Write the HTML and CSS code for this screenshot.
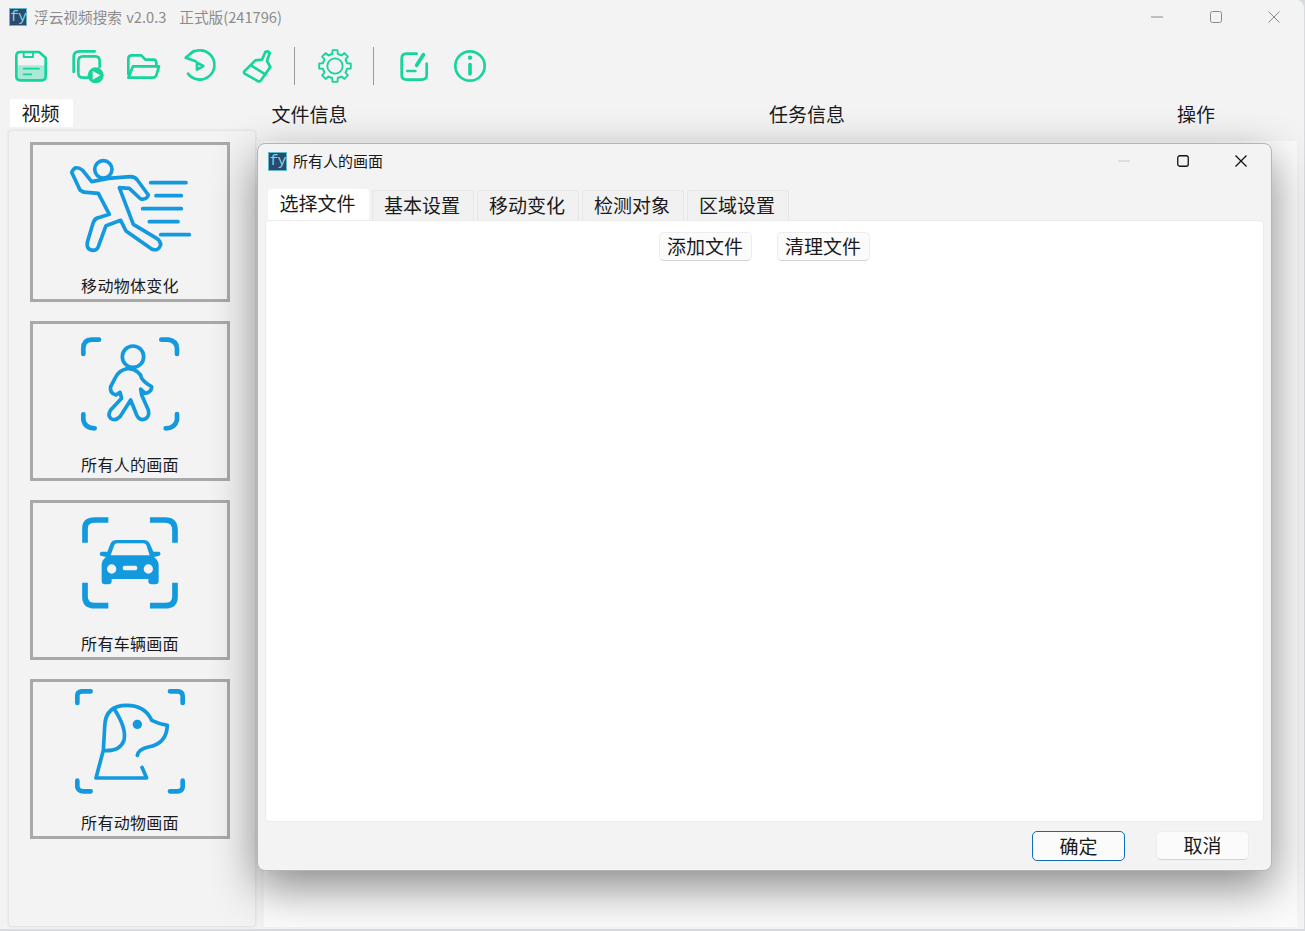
FILE: index.html
```html
<!DOCTYPE html>
<html lang="zh-CN">
<head>
    <meta charset="UTF-8">
    <meta name="viewport" content="width=device-width, initial-scale=1.0">
    <title>浮云视频搜索</title>
    <link rel="stylesheet" href="styles.css">
</head>
<body>

    <div class="app">
        <!-- Title bar -->
        <div class="titlebar">
            <span class="logo">fy</span>
            <span class="app-title">浮云视频搜索 v2.0.3 &nbsp; 正式版(241796)</span>
            <div class="win-controls muted">
                <svg viewBox="0 0 12 12"><path d="M0 6H12"/></svg>
                <svg viewBox="0 0 12 12"><rect x=".5" y=".5" width="11" height="11" rx="2"/></svg>
                <svg viewBox="0 0 12 12"><path d="M.5 .5L11.5 11.5M11.5 .5L.5 11.5"/></svg>
            </div>
        </div>

        <!-- Toolbar -->
        <div class="toolbar">
            <button class="tool"><svg viewBox="34 137 120 120">
                <rect class="tint" x="52" y="195" width="86" height="45"/>
                <path d="M62 155H118L138 172V228Q138 240 126 240H62Q50 240 50 228V167Q50 155 62 155Z"/>
                <path d="M72 155V170H100V155M72 205H118M72 222H95" class="thin"/>
            </svg></button>
            <button class="tool"><svg viewBox="202 137 120 120">
                <path d="M222 215V170Q222 153 240 153H285"/>
                <path d="M265 232H250Q236 232 236 218V183Q236 168 250 168H287Q300 168 300 182V200"/>
                <circle class="solid" cx="288" cy="225" r="24"/>
                <path class="cut" d="M279 212L302 225L279 238Z"/>
            </svg></button>
            <button class="tool"><svg viewBox="370 137 120 120">
                <path d="M386 222V175Q386 165 396 165H425L437 178H462Q470 178 470 188V198"/>
                <path d="M386 232L400 198H478L470 225Q467 232 460 232Z"/>
            </svg></button>
            <button class="tool"><svg viewBox="543 137 120 120">
                <path d="M574 160A44 44 0 1 1 567 220"/>
                <path d="M584 152L560 172L590 183"/>
                <path d="M594 187L613 197L594 208Z"/>
            </svg></button>
            <button class="tool"><svg viewBox="707 137 120 120">
                <path d="M735 210L765 180L785 178L795 155Q803 150 808 158L800 182L810 200L782 240Q778 245 772 242L733 220Q728 215 735 210Z"/>
                <path d="M752 195L795 222"/>
            </svg></button>
            <span class="sep"></span>
            <button class="tool"><svg viewBox="-60 -60 120 120">
                <circle class="thin" r="23"/>
                <g class="thin">
                    <path d="M-14.2 -34.2L-8.3 -36L-7.5 -47.4L7.5 -47.4L8.3 -36L14.2 -34.2"/>
                    <path transform="rotate(45)" d="M-14.2 -34.2L-8.3 -36L-7.5 -47.4L7.5 -47.4L8.3 -36L14.2 -34.2"/>
                    <path transform="rotate(90)" d="M-14.2 -34.2L-8.3 -36L-7.5 -47.4L7.5 -47.4L8.3 -36L14.2 -34.2"/>
                    <path transform="rotate(135)" d="M-14.2 -34.2L-8.3 -36L-7.5 -47.4L7.5 -47.4L8.3 -36L14.2 -34.2"/>
                    <path transform="rotate(180)" d="M-14.2 -34.2L-8.3 -36L-7.5 -47.4L7.5 -47.4L8.3 -36L14.2 -34.2"/>
                    <path transform="rotate(225)" d="M-14.2 -34.2L-8.3 -36L-7.5 -47.4L7.5 -47.4L8.3 -36L14.2 -34.2"/>
                    <path transform="rotate(270)" d="M-14.2 -34.2L-8.3 -36L-7.5 -47.4L7.5 -47.4L8.3 -36L14.2 -34.2"/>
                    <path transform="rotate(315)" d="M-14.2 -34.2L-8.3 -36L-7.5 -47.4L7.5 -47.4L8.3 -36L14.2 -34.2"/>
                </g>
            </svg></button>
            <span class="sep sep-2"></span>
            <button class="tool"><svg viewBox="1182 137 120 120">
                <path d="M1250 160H1220Q1205 160 1205 175V225Q1205 238 1220 238H1265Q1280 238 1280 225V190"/>
                <path d="M1222 212H1246"/>
                <path class="thick" d="M1250 195L1270 163"/>
            </svg></button>
            <button class="tool"><svg viewBox="1350 137 120 120">
                <circle cx="1410" cy="197" r="44"/>
                <circle class="solid" cx="1410" cy="172" r="6.5"/>
                <path class="thick" d="M1410 193V221"/>
            </svg></button>
        </div>

        <!-- Table header -->
        <div class="heads">
            <div class="side-tab-cell"><span class="side-tab">视频</span></div>
            <span class="head">文件信息</span>
            <span class="head">任务信息</span>
            <span class="head">操作</span>
        </div>

        <div class="body">
            <!-- Left video presets -->
            <div class="side">
                <div class="card">
                    <svg class="pic" viewBox="39 30 582 360">
                        <circle class="line" cx="250" cy="103" r="26"/>
                        <path class="line" d="M215 140L188 106Q165 88 155 112L180 165Q188 172 200 172L235 175L268 238L235 248Q225 250 220 262L202 322Q198 345 220 346Q232 345 236 332L258 272L302 256L318 288L395 342Q415 350 422 330Q422 318 410 310L340 268L298 158L328 160L362 192Q380 195 385 180L352 135Q345 125 330 125L265 130Z"/>
                        <path class="line" d="M392 143H498M408 182H484M368 221H484M388 260H474M422 299H508"/>
                    </svg>
                    <span class="card-label">移动物体变化</span>
                </div>
                <div class="card">
                    <svg class="pic" viewBox="39 27 582 360">
                        <path class="corner" d="M190 117V100Q190 75 215 74H237M424 74H445Q470 78 471 100V117M190 298V315Q195 340 224 340M471 297V315Q465 340 437 340"/>
                        <circle class="line" cx="339" cy="125" r="32"/>
                        <path class="line" d="M325 160Q295 165 285 190L272 215Q268 235 288 240L300 232L305 250L272 285Q262 300 272 310Q285 320 300 305L332 255L350 300Q358 318 375 312Q390 305 385 285L365 240L362 222L375 235Q395 232 395 215Q375 205 365 190Q360 165 325 160Z"/>
                    </svg>
                    <span class="card-label">所有人的画面</span>
                </div>
                <div class="card">
                    <svg class="pic" viewBox="39 24 582 360">
                        <path class="corner wide" d="M195 143V100Q195 75 225 75H265M390 75H435Q465 75 465 105V143M195 263V305Q195 332 225 332H265M390 332H435Q465 332 465 305V263"/>
                        <path class="car" d="M262 170L272 145Q277 135 290 135H372Q384 135 390 147L400 170H418Q425 176 418 182L402 186Q415 195 416 210V258Q416 268 405 268H395Q385 268 385 258V252H275V258Q275 268 265 268H255Q245 268 245 258V210Q245 195 258 186L242 182Q236 176 243 170ZM272 181L283 150Q285 145 292 145H370Q376 145 379 150L389 181ZM261 222A14 14 0 1 0 289 222A14 14 0 1 0 261 222ZM371 222A14 14 0 1 0 399 222A14 14 0 1 0 371 222ZM314 212H346Q352 212 352 219Q352 226 346 226H314Q308 226 308 219Q308 212 314 212Z"/>
                    </svg>
                    <span class="card-label">所有车辆画面</span>
                </div>
                <div class="card">
                    <svg class="pic" viewBox="39 30 582 360">
                        <path class="corner" d="M172 93V70Q172 60 185 58H212M450 58H475Q488 60 488 72V93M172 326V345Q175 358 190 358H212M450 358H475Q488 355 488 345V326"/>
                        <path class="line" d="M352 250Q355 232 385 225Q440 215 442 160Q415 155 395 145Q375 100 320 100Q255 100 254 165L250 235L228 318H380L366 286"/>
                        <path class="line" d="M285 115Q320 170 312 205Q300 238 254 236"/>
                        <circle class="dot" cx="352" cy="157" r="14"/>
                    </svg>
                    <span class="card-label">所有动物画面</span>
                </div>
            </div>

            <div class="list"></div>
        </div>
    </div>

    <!-- Dialog -->
    <div class="dialog">
        <div class="dialog-title">
            <span class="logo logo-small">fy</span>
            <span class="dialog-name">所有人的画面</span>
            <div class="win-controls dark">
                <svg class="off" viewBox="0 0 12 12"><path d="M0 6H12"/></svg>
                <svg viewBox="0 0 12 12"><rect x=".75" y=".75" width="10.5" height="10.5" rx="2"/></svg>
                <svg viewBox="0 0 12 12"><path d="M.5 .5L11.5 11.5M11.5 .5L.5 11.5"/></svg>
            </div>
        </div>
        <div class="tabs">
            <span class="tab active">选择文件</span>
            <span class="tab">基本设置</span>
            <span class="tab">移动变化</span>
            <span class="tab">检测对象</span>
            <span class="tab">区域设置</span>
        </div>
        <div class="tab-page">
            <button class="btn">添加文件</button>
            <button class="btn">清理文件</button>
        </div>
        <div class="dialog-actions">
            <button class="btn primary">确定</button>
            <button class="btn">取消</button>
        </div>
    </div>

</body>
</html>
```
FILE: styles.css
```css
* {
    margin: 0;
    padding: 0;
    box-sizing: border-box;
}

body {
    width: 1305px;
    height: 931px;
    overflow: hidden;
    background-color: #d9dbe0;
    font-family: "Noto Sans CJK SC", "Liberation Sans", sans-serif;
    color: #1a1a1a;
}

.app {
    width: 1304px;
    height: 929px;
    background-color: #f3f3f3;
    border-top-right-radius: 8px;
    display: flex;
    flex-direction: column;
}

/* Title bars */
.titlebar {
    height: 34px;
    display: flex;
    align-items: center;
    padding-left: 9px;
}

.logo {
    width: 18px;
    height: 18px;
    flex: none;
    padding-top: 1px;
    background-color: #2c4a6e;
    border: 1px solid #62b9cc;
    color: #7fd6e0;
    font-family: "Liberation Mono", monospace;
    font-size: 15px;
    line-height: 15px;
    text-align: center;
    letter-spacing: -1px;
}

.logo-small {
    width: 19px;
    height: 19px;
    margin-right: 6px;
}

.app-title {
    margin-left: 7px;
    font-size: 14.67px;
    word-spacing: 1px;
    color: #8c8c8c;
    padding-bottom: 1px;
}

.win-controls {
    margin-left: auto;
    display: flex;
    gap: 46.5px;
}

.win-controls svg {
    width: 12px;
    height: 12px;
    fill: none;
    stroke-width: 1;
}

.muted {
    padding-right: 24px;
}

.muted svg {
    stroke: #8a8a8a;
}

.dark {
    padding-right: 24px;
}

.dark svg {
    stroke: #111;
    stroke-width: 1.3;
}

.dark svg.off {
    stroke: #c8c8c8;
    stroke-width: 1;
}

/* Toolbar */
.toolbar {
    height: 64px;
    padding-left: 3px;
    display: flex;
    align-items: center;
}

.tool {
    width: 56.2px;
    height: 40px;
    border: none;
    background: none;
    display: flex;
    align-items: center;
    justify-content: center;
}

.tool svg {
    width: 40px;
    height: 40px;
    fill: none;
    stroke: #17d49c;
    stroke-width: 8;
    stroke-linecap: round;
    stroke-linejoin: round;
}

.tool .tint {
    fill: #17d49c;
    fill-opacity: 0.33;
    stroke: none;
}

.tool .thin {
    stroke-width: 5.5;
}

.tool .thick {
    stroke-width: 11;
}

.tool .solid {
    fill: #17d49c;
    stroke: none;
}

.tool .cut {
    fill: #f3f3f3;
    stroke: none;
}

.sep {
    width: 1px;
    height: 38px;
    margin: 0 0 0 10px;
    background-color: #9a9a9a;
}

.sep + .tool {
    margin-left: 12px;
}

.sep-2 {
    margin-left: 10px;
}

/* Table header */
.heads {
    height: 31px;
    margin-top: 1px;
    display: grid;
    grid-template-columns: 271.5px 497.5px 408px 1fr;
    align-items: start;
    font-size: 19px;
}

.side-tab-cell {
    padding-left: 10px;
}

.side-tab {
    display: block;
    width: 63px;
    height: 28px;
    padding-right: 2px;
    background-color: #fff;
    text-align: center;
    line-height: 27px;
    border-radius: 2px 2px 0 0;
}

.head {
    line-height: 30px;
}

.body {
    flex: 1;
    display: flex;
    gap: 8px;
    padding: 0 7px 2px 8px;
}

.side {
    width: 248px;
    background-color: #f3f3f3;
    border: 1px solid #e6e6e6;
    border-radius: 4px;
    padding: 11px 0 0 21px;
    display: flex;
    flex-direction: column;
    gap: 19px;
    box-shadow: 0 0 3px rgba(0, 0, 0, 0.08);
}

.card {
    width: 200px;
    height: 160px;
    border: 3px solid #a9a9a9;
    display: flex;
    flex-direction: column;
    align-items: center;
}

.pic {
    width: 194px;
    height: 120px;
    flex: none;
    fill: none;
}

.pic .line {
    stroke: #1399de;
    stroke-width: 11;
    stroke-linecap: round;
    stroke-linejoin: round;
}

.pic .corner {
    stroke: #1399de;
    stroke-width: 14;
    stroke-linecap: round;
}

.pic .wide {
    stroke-width: 17;
    stroke-linecap: butt;
}

.pic .car {
    fill: #1399de;
    fill-rule: evenodd;
}

.pic .dot {
    fill: #1399de;
}

.card-label {
    font-size: 16px;
    letter-spacing: 0.3px;
    line-height: 24px;
    margin-top: 8px;
}

.list {
    flex: 1;
    margin-top: 11px;
    background-color: #fbfbfb;
}

/* Dialog */
.dialog {
    position: absolute;
    left: 257px;
    top: 143px;
    width: 1015px;
    height: 728px;
    background-color: #f3f3f3;
    border: 1px solid #b5b5b5;
    border-radius: 8px;
    box-shadow: 0 16px 45px rgba(0, 0, 0, 0.46);
    display: flex;
    flex-direction: column;
}

.dialog-title {
    height: 34px;
    padding-left: 10px;
    display: flex;
    align-items: center;
    font-size: 15px;
}

.dialog-name {
    padding-bottom: 2px;
}

.tabs {
    height: 31px;
    margin-top: 11px;
    padding-left: 10px;
    display: flex;
    gap: 3px;
    font-size: 19px;
}

.tab {
    width: 102px;
    height: 30px;
    margin-top: 1px;
    padding-right: 2px;
    background-color: #f1f1f1;
    border: 1px solid #e6e6e6;
    border-bottom: none;
    border-radius: 3px 3px 0 0;
    text-align: center;
    line-height: 28px;
}

.tab.active {
    width: 101px;
    margin-top: 0;
    height: 31px;
    background-color: #fff;
    border-color: #fff;
    line-height: 25px;
}

.tab-page {
    height: 602px;
    margin: 0 7px 0 7px;
    background-color: #fff;
    border: 1px solid #ebebeb;
    border-radius: 4px;
    padding-top: 11px;
    padding-right: 1px;
    display: flex;
    justify-content: center;
    align-items: flex-start;
    gap: 25px;
}

.btn {
    width: 93px;
    height: 29px;
    padding-bottom: 2px;
    background-color: #fbfbfb;
    border: 1px solid #ededed;
    border-bottom-color: #d2d2d2;
    border-radius: 5px;
    font-family: inherit;
    font-size: 19px;
    line-height: 25px;
    color: #1a1a1a;
}

.btn.primary {
    border: 1.5px solid #0f6cbd;
    height: 30px;
}

.dialog-actions {
    margin-top: 9px;
    padding-right: 22px;
    display: flex;
    justify-content: flex-end;
    align-items: flex-start;
    gap: 31px;
}
```
